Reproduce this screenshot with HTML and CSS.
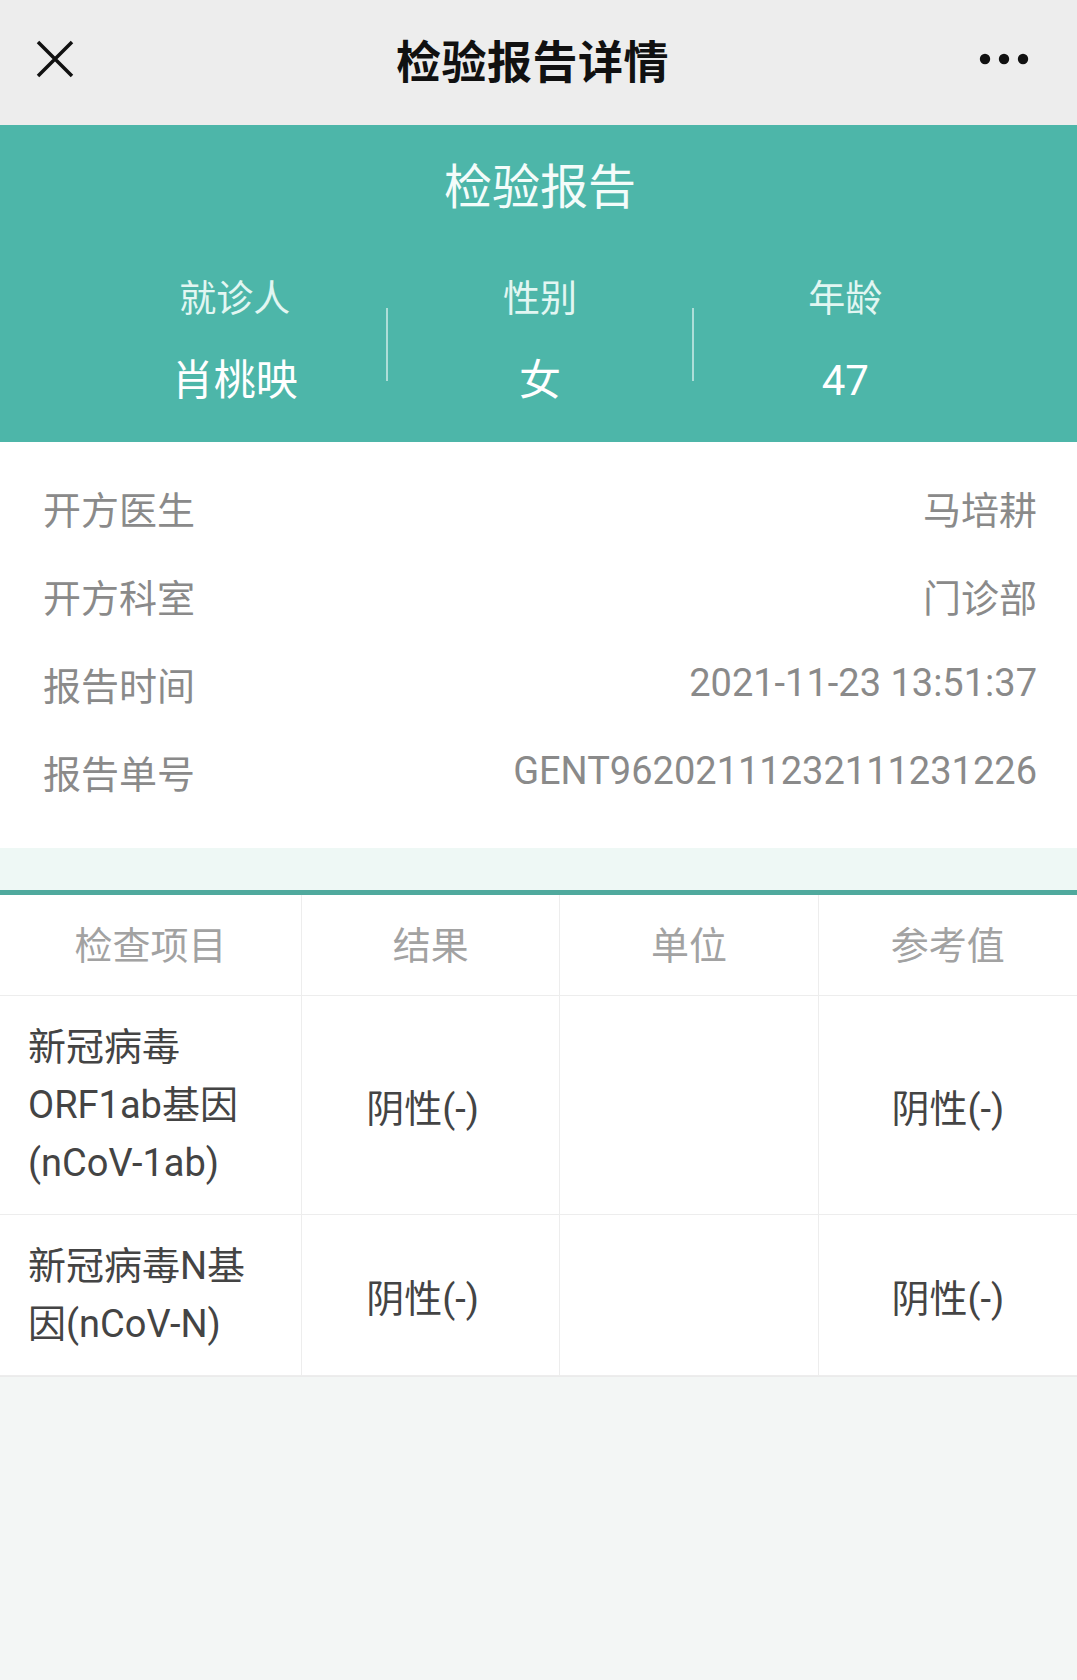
FILE: index.html
```html
<!DOCTYPE html>
<html lang="zh-CN">
<head>
    <meta charset="UTF-8">
    <meta name="viewport" content="width=device-width, initial-scale=1.0">
    <title>检验报告详情</title>
    <link rel="stylesheet" href="styles.css">
</head>
<body>
    <header class="navbar">
        <svg class="nav-close" width="38" height="38" viewBox="0 0 38 38">
            <path d="M2 2 L36 36 M36 2 L2 36" stroke="#111" stroke-width="3.5" fill="none"/>
        </svg>
        <div class="nav-title">检验报告详情</div>
        <svg class="nav-more" width="50" height="12" viewBox="0 0 50 12">
            <circle cx="6" cy="6" r="5.2" fill="#111"/>
            <circle cx="25" cy="6" r="5.2" fill="#111"/>
            <circle cx="44" cy="6" r="5.2" fill="#111"/>
        </svg>
    </header>

    <section class="report-head">
        <h1>检验报告</h1>
        <div class="patient">
            <div class="stat">
                <div class="stat-label">就诊人</div>
                <div class="stat-value">肖桃映</div>
            </div>
            <div class="stat-divider"></div>
            <div class="stat">
                <div class="stat-label">性别</div>
                <div class="stat-value">女</div>
            </div>
            <div class="stat-divider"></div>
            <div class="stat">
                <div class="stat-label">年龄</div>
                <div class="stat-value">47</div>
            </div>
        </div>
    </section>

    <section class="info">
        <div class="info-row"><span>开方医生</span><span>马培耕</span></div>
        <div class="info-row"><span>开方科室</span><span>门诊部</span></div>
        <div class="info-row"><span>报告时间</span><span>2021-11-23 13:51:37</span></div>
        <div class="info-row"><span>报告单号</span><span>GENT96202111232111231226</span></div>
    </section>

    <div class="spacer"></div>

    <section class="results">
        <div class="cell head">检查项目</div>
        <div class="cell head">结果</div>
        <div class="cell head">单位</div>
        <div class="cell head">参考值</div>

        <div class="cell item">新冠病毒<br>ORF1ab基因<br>(nCoV-1ab)</div>
        <div class="cell value result">阴性(-)</div>
        <div class="cell value"></div>
        <div class="cell value">阴性(-)</div>

        <div class="cell item">新冠病毒N基<br>因(nCoV-N)</div>
        <div class="cell value result">阴性(-)</div>
        <div class="cell value"></div>
        <div class="cell value">阴性(-)</div>
    </section>
</body>
</html>
```

FILE: styles.css
```css
body {
    font-family: Roboto, "Noto Sans CJK SC", sans-serif;
    margin: 0;
    min-height: 1680px;
    background-color: #f3f6f5;
}

.navbar {
    display: grid;
    grid-template-columns: 1fr auto 1fr;
    align-items: center;
    height: 118px;
    padding: 0 48px 7px 36px;
    background: #ededed;
}

.nav-close {
    display: block;
}

.nav-title {
    font-size: 45px;
    font-weight: bold;
    color: #111;
    letter-spacing: 0.5px;
}

.nav-more {
    justify-self: end;
    display: block;
}

.report-head {
    background: #4db6a9;
    padding: 31px 80px 33px 83px;
    color: #fff;
    text-align: center;
}

.report-head h1 {
    margin: 0;
    font-size: 48px;
    font-weight: normal;
    line-height: 64px;
    color: #f4fcfa;
}

.patient {
    display: flex;
    margin-top: 55px;
}

.stat {
    flex: 1;
}

.stat-label {
    font-size: 37px;
    line-height: 50px;
    color: #e2f6f2;
}

.stat-value {
    margin-top: 28px;
    font-size: 42px;
    line-height: 56px;
    color: #fff;
}

.stat-divider {
    width: 2px;
    height: 73px;
    align-self: center;
    margin-top: 4px;
    background: rgba(255, 255, 255, 0.55);
}

.info {
    background: #fff;
    padding: 21px 40px 33px 43px;
}

.info-row {
    display: flex;
    justify-content: space-between;
    align-items: center;
    height: 88px;
    font-size: 38px;
    color: #8a8a8a;
}

.spacer {
    height: 42px;
    background: #eef8f5;
    border-bottom: 5px solid #4fa99d;
}

.results {
    display: grid;
    grid-template-columns: 302px 1fr 1fr 1fr;
    background: #fff;
    border-bottom: 1px solid #ebebeb;
}

.cell {
    display: flex;
    align-items: center;
    justify-content: center;
    font-size: 38px;
    color: #444;
    border-right: 1px solid #ededed;
    border-bottom: 1px solid #ededed;
}

.cell:nth-child(4n) {
    border-right: none;
}

.cell.head {
    height: 94px;
    padding-bottom: 6px;
    color: #a2a2a2;
}

.cell.item {
    justify-content: flex-start;
    padding: 22px 10px 22px 28px;
    line-height: 58px;
}

.cell.result {
    padding-right: 16px;
}
```
